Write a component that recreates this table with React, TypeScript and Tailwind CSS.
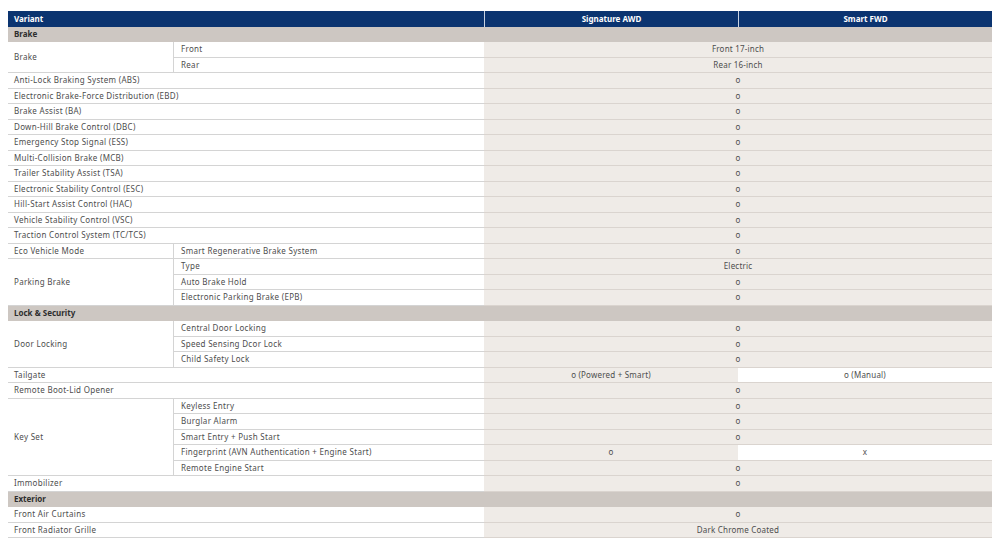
import React from 'react'

type Item = { sub: string; value?: string; sig?: string; smart?: string }

type Row =
    | { section: string }
    | { group: string; items: Item[] }
    | { label: string; value?: string; sig?: string; smart?: string }

const rows: Row[] = [
    { section: 'Brake' },
    { group: 'Brake', items: [{ sub: 'Front', value: 'Front 17-inch' }, { sub: 'Rear', value: 'Rear 16-inch' }] },
    { label: 'Anti-Lock Braking System (ABS)', value: 'o' },
    { label: 'Electronic Brake-Force Distribution (EBD)', value: 'o' },
    { label: 'Brake Assist (BA)', value: 'o' },
    { label: 'Down-Hill Brake Control (DBC)', value: 'o' },
    { label: 'Emergency Stop Signal (ESS)', value: 'o' },
    { label: 'Multi-Collision Brake (MCB)', value: 'o' },
    { label: 'Trailer Stability Assist (TSA)', value: 'o' },
    { label: 'Electronic Stability Control (ESC)', value: 'o' },
    { label: 'Hill-Start Assist Control (HAC)', value: 'o' },
    { label: 'Vehicle Stability Control (VSC)', value: 'o' },
    { label: 'Traction Control System (TC/TCS)', value: 'o' },
    { group: 'Eco Vehicle Mode', items: [{ sub: 'Smart Regenerative Brake System', value: 'o' }] },
    {
        group: 'Parking Brake',
        items: [
            { sub: 'Type', value: 'Electric' },
            { sub: 'Auto Brake Hold', value: 'o' },
            { sub: 'Electronic Parking Brake (EPB)', value: 'o' },
        ],
    },
    { section: 'Lock & Security' },
    {
        group: 'Door Locking',
        items: [
            { sub: 'Central Door Locking', value: 'o' },
            { sub: 'Speed Sensing Dcor Lock', value: 'o' },
            { sub: 'Child Safety Lock', value: 'o' },
        ],
    },
    { label: 'Tailgate', sig: 'o (Powered + Smart)', smart: 'o (Manual)' },
    { label: 'Remote Boot-Lid Opener', value: 'o' },
    {
        group: 'Key Set',
        items: [
            { sub: 'Keyless Entry', value: 'o' },
            { sub: 'Burglar Alarm', value: 'o' },
            { sub: 'Smart Entry + Push Start', value: 'o' },
            { sub: 'Fingerprint (AVN Authentication + Engine Start)', sig: 'o', smart: 'x' },
            { sub: 'Remote Engine Start', value: 'o' },
        ],
    },
    { label: 'Immobilizer', value: 'o' },
    { section: 'Exterior' },
    { label: 'Front Air Curtains', value: 'o' },
    { label: 'Front Radiator Grille', value: 'Dark Chrome Coated' },
]

const spans: Record<number, string> = {
    1: 'row-span-1',
    2: 'row-span-2',
    3: 'row-span-3',
    5: 'row-span-5',
}

function Values({ value, sig, smart }: { value?: string; sig?: string; smart?: string }) {
    if (value !== undefined) {
        return <div className='col-span-2 flex items-center justify-center bg-[#efebe7] border-b border-[#dad4cf] tracking-[0.2px]'>{value}</div>
    }
    return (
        <>
            <div className='flex items-center justify-center bg-[#efebe7] border-b border-[#dad4cf] tracking-[0.2px]'>{sig}</div>
            <div className='flex items-center justify-center bg-white border-b border-[#dad4cf] tracking-[0.2px]'>{smart}</div>
        </>
    )
}

export default function App() {
    return (
        <div className='w-[1000px] h-[539px] bg-white pt-[11px] pl-2 overflow-hidden' style={{ fontFamily: '"Noto Sans", Inter, sans-serif' }}>
            <div className='grid grid-cols-[166px_310px_254px_254px] auto-rows-[15.5px] text-[8px] leading-none text-[#4d4d4d]'>
                <div className='col-span-2 flex items-center px-[6px] bg-[#0b3470] text-white font-bold'>Variant</div>
                <div className='flex items-center justify-center bg-[#0b3470] text-white font-bold border-l border-[#c9d3e2]'>Signature AWD</div>
                <div className='flex items-center justify-center bg-[#0b3470] text-white font-bold border-l border-[#c9d3e2]'>Smart FWD</div>

                {rows.map((row, i) => {
                    if ('section' in row) {
                        return (
                            <div key={i} className='col-span-4 flex items-center px-[6px] bg-[#cdc7c2] text-[#2e2e2e] font-bold'>
                                {row.section}
                            </div>
                        )
                    }
                    if ('group' in row) {
                        return (
                            <React.Fragment key={i}>
                                <div className={`${spans[row.items.length]} flex items-center px-[6px] bg-white border-b border-r border-[#d4d4d4] tracking-[0.3px]`}>
                                    {row.group}
                                </div>
                                {row.items.map((item, j) => (
                                    <React.Fragment key={j}>
                                        <div className='flex items-center px-[7px] bg-white border-b border-[#d4d4d4] tracking-[0.3px]'>{item.sub}</div>
                                        <Values value={item.value} sig={item.sig} smart={item.smart} />
                                    </React.Fragment>
                                ))}
                            </React.Fragment>
                        )
                    }
                    return (
                        <React.Fragment key={i}>
                            <div className='col-span-2 flex items-center px-[6px] bg-white border-b border-[#d4d4d4] tracking-[0.3px]'>{row.label}</div>
                            <Values value={row.value} sig={row.sig} smart={row.smart} />
                        </React.Fragment>
                    )
                })}
            </div>
        </div>
    )
}
